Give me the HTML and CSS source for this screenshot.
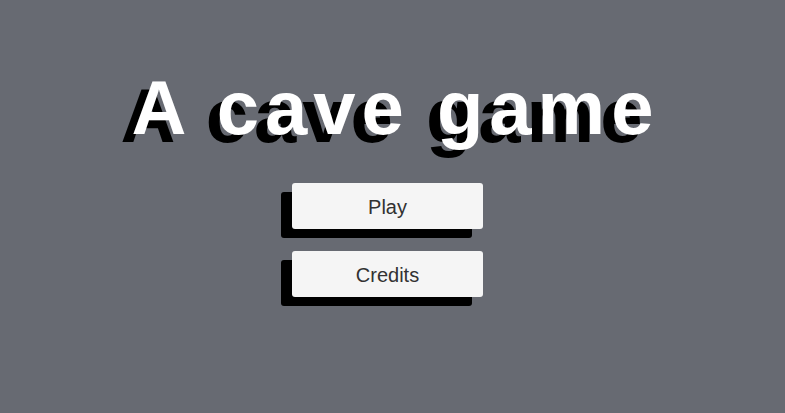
FILE: index.html
```html
<!DOCTYPE html>
<html lang="en">
<head>
<meta charset="utf-8">
<title>A cave game</title>
<link rel="stylesheet" href="styles.css">
</head>
<body>
<main class="menu">
  <h1 class="title">A cave game</h1>
  <nav class="actions">
    <button class="btn" type="button">Play</button>
    <button class="btn" type="button">Credits</button>
  </nav>
</main>
</body>
</html>
```
FILE: styles.css
```css
html, body {
  margin: 0;
  height: 100%;
}

body {
  background: #676a72;
  font-family: "Liberation Sans", Arial, sans-serif;
  overflow: hidden;
}

.menu {
  display: flex;
  flex-direction: column;
  align-items: center;
}

/* big title with a hard offset drop shadow */
.title {
  margin: 70px 0 0;
  padding-left: 6px;
  font-size: 76px;
  line-height: 76px;
  font-weight: 700;
  letter-spacing: 6px;
  color: #ffffff;
  text-shadow: -11px 8px 0 #000000;
  white-space: nowrap;
}

.actions {
  display: flex;
  flex-direction: column;
  gap: 22px;
  margin-top: 37px;
  margin-right: 10px;
}

.btn {
  width: 191px;
  height: 46px;
  padding: 2px 0 0;
  border: 0;
  border-radius: 3px;
  background: #f5f5f5;
  box-shadow: -11px 9px 0 #000000;
  color: #323232;
  font-family: "Liberation Sans", Arial, sans-serif;
  font-size: 20px;
  line-height: 44px;
  text-align: center;
}
```
